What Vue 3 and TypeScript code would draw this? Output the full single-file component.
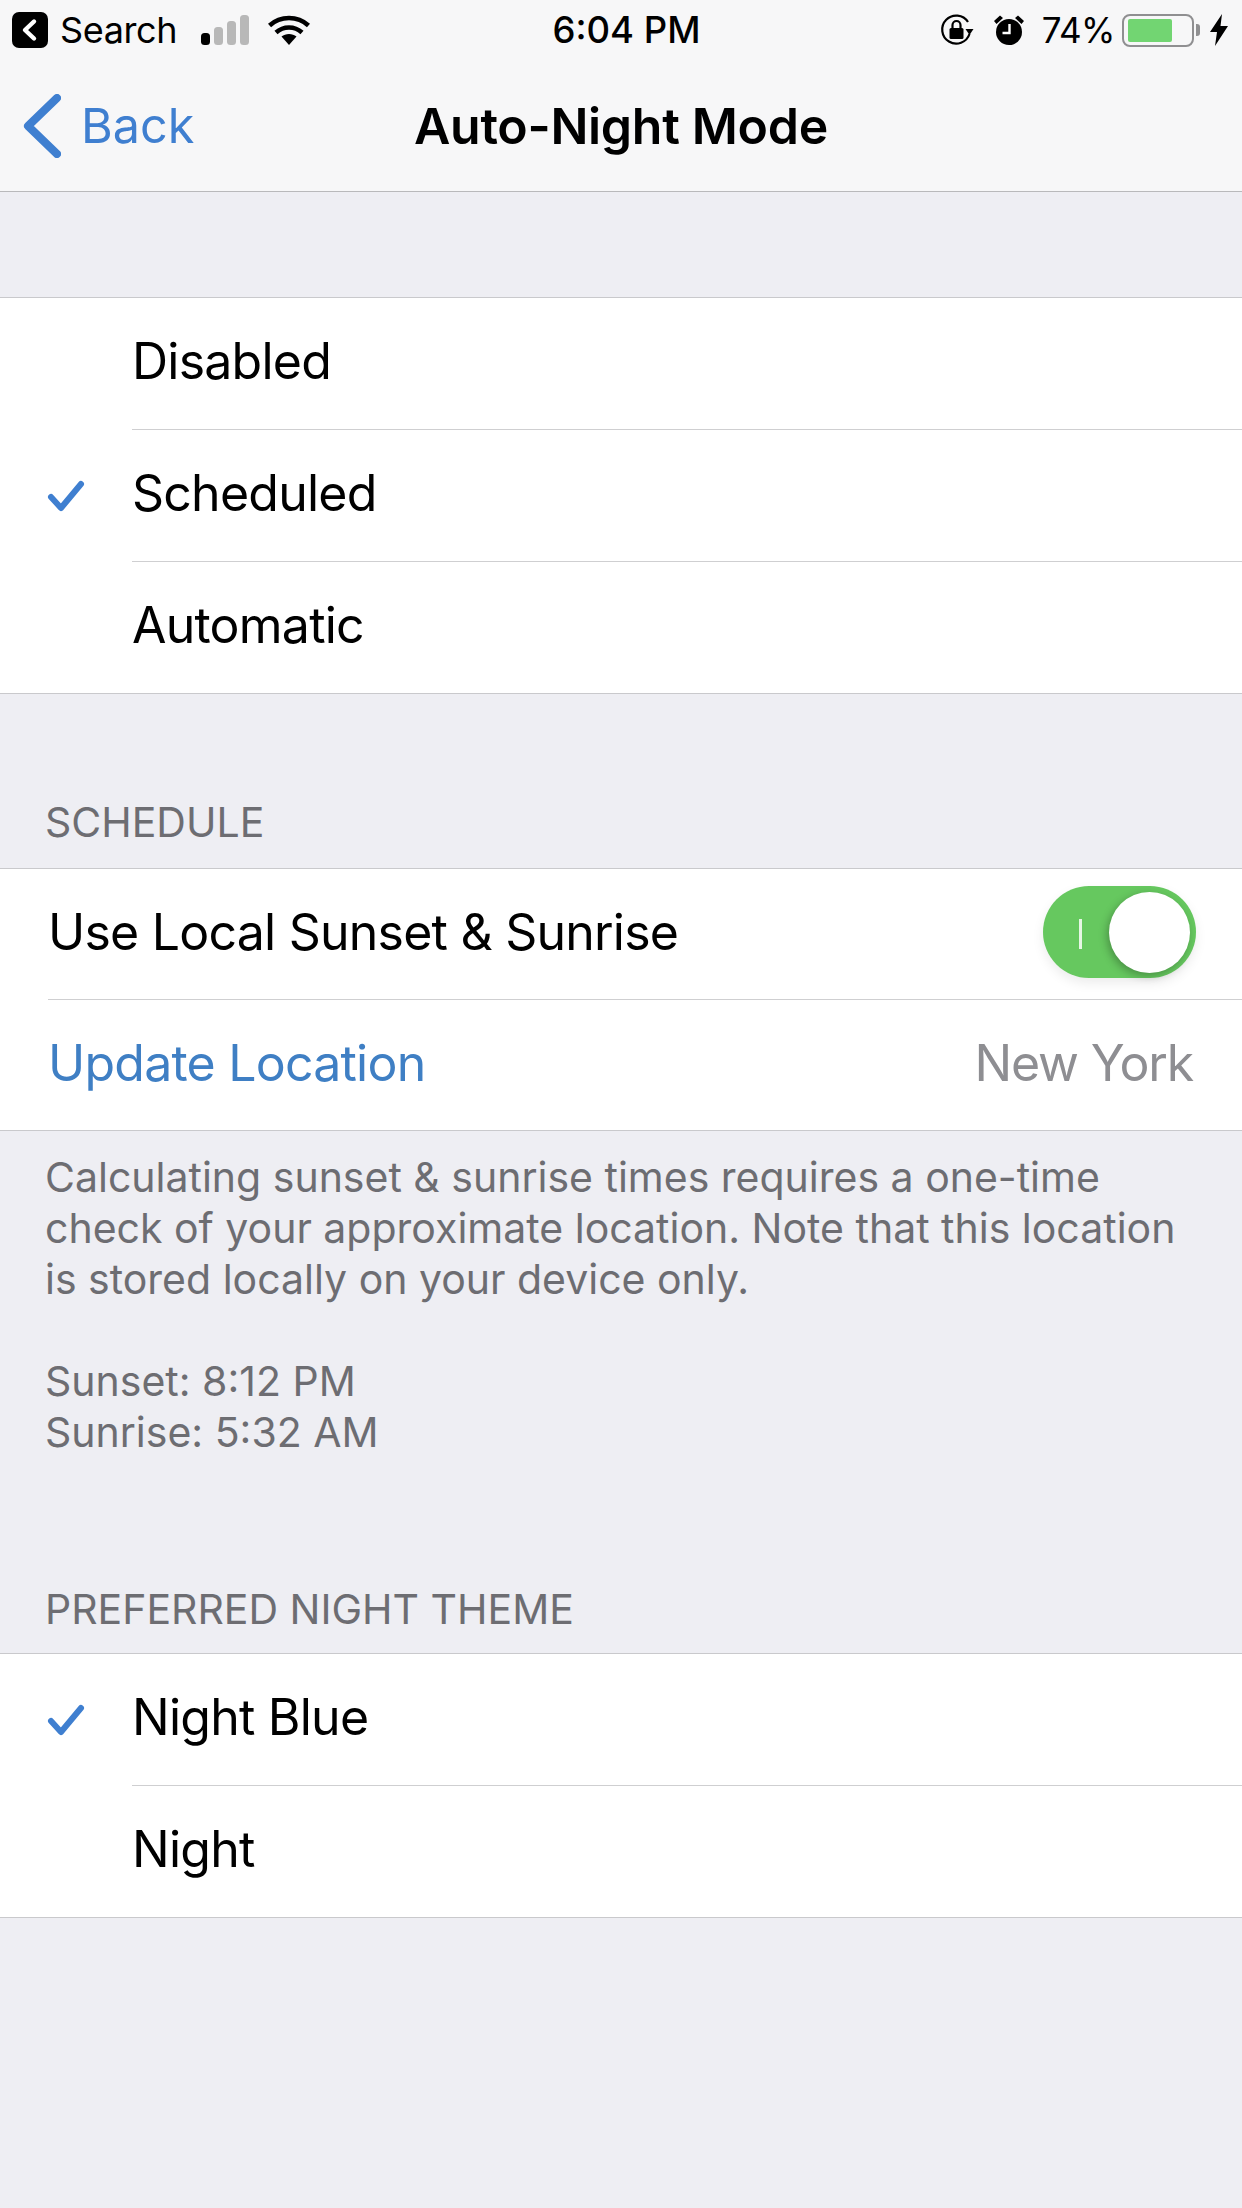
<script setup lang="ts">
interface Row {
  label: string
  checked: boolean
}

const modes: Row[] = [
  { label: 'Disabled', checked: false },
  { label: 'Scheduled', checked: true },
  { label: 'Automatic', checked: false }
]

const themes: Row[] = [
  { label: 'Night Blue', checked: true },
  { label: 'Night', checked: false }
]
</script>

<template>
  <div class="screen">
    <header class="top">
      <div class="status">
        <div class="status-left">
          <svg class="back-app" viewBox="0 0 36 36">
            <rect width="36" height="36" rx="7" fill="#000" />
            <path d="M22 9.5 13 18l9 8.5" fill="none" stroke="#fff" stroke-width="4.4" stroke-linecap="round" stroke-linejoin="round" />
          </svg>
          <span class="search">Search</span>
          <svg class="signal" viewBox="0 0 48 30">
            <rect x="0" y="18" width="9" height="12" rx="3.5" fill="#000" />
            <rect x="13" y="12" width="9" height="18" rx="3.5" fill="#b8b8b8" />
            <rect x="26" y="6" width="9" height="24" rx="3.5" fill="#b8b8b8" />
            <rect x="39" y="0" width="9" height="30" rx="3.5" fill="#b8b8b8" />
          </svg>
          <svg class="wifi" viewBox="0 0 42 30">
            <path d="M21 30 13.500 21.500C17.500 18 24.500 18 28.500 21.500Z" fill="#000" />
            <path d="M1.500 10.500C12.500 .5 29.500 .5 40.500 10.500M8 17.500C15.500 10.800 26.500 10.800 34 17.500" fill="none" stroke="#000" stroke-width="4.600" />
          </svg>
        </div>
        <div class="clock">6:04 PM</div>
        <div class="status-right">
          <svg class="lock" viewBox="0 0 34 34">
            <path d="M29.500 21A14 14 0 1 1 28 9" fill="none" stroke="#000" stroke-width="2.200" />
            <path d="M33.500 16 25.500 16 29.500 22Z" fill="#000" />
            <rect x="9.500" y="15" width="14" height="11" rx="1.500" fill="#000" />
            <path d="M12.500 15v-3a4 4 0 0 1 8 0v3" fill="none" stroke="#000" stroke-width="2.200" />
          </svg>
          <svg class="alarm" viewBox="0 0 32 32">
            <circle cx="16" cy="18" r="13" fill="#000" />
            <path d="M1 7 7 1.500 10 4 3.500 10ZM31 7 25 1.500 22 4 28.500 10Z" fill="#000" />
            <path d="M16.500 10v9H9.500" fill="none" stroke="#fff" stroke-width="2.400" />
          </svg>
          <span class="percent">74%</span>
          <div class="battery">
            <div class="battery-shell">
              <div class="battery-level" :style="{ width: '74%' }"></div>
            </div>
            <div class="battery-cap"></div>
          </div>
          <svg class="bolt" viewBox="0 0 18 32">
            <path d="M12 0 0 18H7L5 32 18 12H10.500Z" fill="#000" />
          </svg>
        </div>
      </div>
      <nav class="nav">
        <div class="nav-back">
          <svg class="chevron" viewBox="0 0 38 64">
            <path d="M34 4 5 32l29 28" fill="none" stroke="#3f7fd0" stroke-width="8" stroke-linecap="round" stroke-linejoin="round" />
          </svg>
          <span>Back</span>
        </div>
        <h1 class="title">Auto-Night Mode</h1>
      </nav>
    </header>

    <section class="group first">
      <div v-for="row in modes" :key="row.label" class="row check-row">
        <div class="check-slot">
          <svg v-if="row.checked" class="check" viewBox="0 0 38 32">
            <path d="M4 17 14 28 34 4" fill="none" stroke="#3f7fd0" stroke-width="6" stroke-linecap="round" stroke-linejoin="round" />
          </svg>
        </div>
        <div class="row-body">{{ row.label }}</div>
      </div>
    </section>

    <h2 class="section-head schedule-head">SCHEDULE</h2>
    <section class="group">
      <div class="row plain-row">
        <div class="row-body">
          <span>Use Local Sunset &amp; Sunrise</span>
          <div class="switch">
            <i class="switch-mark"></i>
            <i class="switch-knob"></i>
          </div>
        </div>
      </div>
      <div class="row plain-row">
        <div class="row-body">
          <span class="link">Update Location</span>
          <span class="value">New York</span>
        </div>
      </div>
    </section>
    <div class="note">
      <p>Calculating sunset &amp; sunrise times requires a one-time<br />check of your approximate location. Note that this location<br />is stored locally on your device only.</p>
      <p>Sunset: 8:12 PM<br />Sunrise: 5:32 AM</p>
    </div>

    <h2 class="section-head theme-head">PREFERRED NIGHT THEME</h2>
    <section class="group">
      <div v-for="row in themes" :key="row.label" class="row check-row">
        <div class="check-slot">
          <svg v-if="row.checked" class="check" viewBox="0 0 38 32">
            <path d="M4 17 14 28 34 4" fill="none" stroke="#3f7fd0" stroke-width="6" stroke-linecap="round" stroke-linejoin="round" />
          </svg>
        </div>
        <div class="row-body">{{ row.label }}</div>
      </div>
    </section>
  </div>
</template>

<style>
html,
body {
  margin: 0;
  background: #eeeef3;
}
</style>

<style scoped>
.screen {
  width: 1242px;
  height: 2208px;
  overflow: hidden;
  background: #eeeef3;
  font-family: Inter, "Liberation Sans", sans-serif;
  color: #000;
}

.top {
  height: 192px;
  background: #f7f7f8;
  border-bottom: 1px solid #b9b9bb;
  box-sizing: border-box;
}

.status {
  height: 60px;
  display: grid;
  grid-template-columns: 1fr auto 1fr;
  align-items: center;
  padding: 0 14px 0 12px;
}

.status-left,
.status-right {
  display: flex;
  align-items: center;
}

.status-right {
  justify-content: flex-end;
}

.back-app {
  width: 36px;
  height: 36px;
}

.search {
  font-size: 36px;
  margin-left: 12px;
  letter-spacing: -0.4px;
}

.signal {
  width: 48px;
  height: 30px;
  margin-left: 24px;
}

.wifi {
  width: 42px;
  height: 30px;
  margin-left: 19px;
}

.clock {
  font-size: 36.500px;
  font-weight: 500;
  margin-left: 13px;
}

.lock {
  width: 34px;
  height: 34px;
}

.alarm {
  width: 32px;
  height: 32px;
  margin-left: 19px;
}

.percent {
  font-size: 35px;
  margin-left: 17px;
  letter-spacing: -0.5px;
}

.battery {
  display: flex;
  align-items: center;
  margin-left: 7px;
}

.battery-shell {
  width: 72px;
  height: 33px;
  box-sizing: border-box;
  border: 2.500px solid #8f8f91;
  border-radius: 8px;
  padding: 3px 4px;
}

.battery-level {
  height: 100%;
  background: #72d572;
  border-radius: 2px;
}

.battery-cap {
  width: 4px;
  height: 12px;
  background: #8f8f91;
  border-radius: 0 3px 3px 0;
  margin-left: 2px;
}

.bolt {
  width: 18px;
  height: 32px;
  margin-left: 10px;
}

.nav {
  height: 131px;
  position: relative;
  display: flex;
  align-items: center;
  justify-content: center;
}

.nav-back {
  position: absolute;
  left: 23px;
  top: 0;
  bottom: 0;
  display: flex;
  align-items: center;
  font-size: 48.500px;
  color: #3f7fd0;
}

.chevron {
  width: 38px;
  height: 64px;
  margin-right: 20px;
}

.title {
  margin: 0;
  font-size: 50px;
  font-weight: 600;
  letter-spacing: -0.3px;
}

.group {
  background: #fff;
  border-top: 1px solid #c9c9cc;
  border-bottom: 1px solid #c9c9cc;
}

.first {
  margin-top: 105px;
}

.row {
  display: flex;
  height: 131.400px;
  box-sizing: border-box;
  font-size: 50px;
  letter-spacing: -0.770px;
}

.first .row {
  height: 131.800px;
}

.check-slot {
  width: 132px;
  flex: none;
  display: flex;
  align-items: center;
  padding-left: 47px;
  box-sizing: border-box;
}

.check {
  width: 38px;
  height: 32px;
}

.row-body {
  flex: 1;
  display: flex;
  align-items: center;
  justify-content: space-between;
  border-bottom: 1px solid #cfcfd1;
  padding-bottom: 4px;
}

.row:last-child .row-body {
  border-bottom: none;
}

.plain-row {
  height: 130.400px;
  padding-left: 48px;
}

.plain-row .row-body {
  padding-right: 49px;
}

.link {
  color: #3f7fc4;
}

.value {
  color: #8e8e92;
  letter-spacing: -1.200px;
}

.switch {
  width: 153px;
  height: 92px;
  margin-right: -3px;
  border-radius: 46px;
  background: #66c85f;
  position: relative;
  box-shadow: 0 5px 12px rgba(0, 0, 0, 0.08);
}

.switch-mark {
  position: absolute;
  left: 36px;
  top: 33px;
  width: 3px;
  height: 30px;
  background: #e6f6e4;
}

.switch-knob {
  position: absolute;
  right: 6px;
  top: 6px;
  width: 81px;
  height: 81px;
  border-radius: 50%;
  background: #fff;
  box-shadow: -2px 3px 9px rgba(0, 0, 0, 0.28);
}

.section-head {
  margin: 0;
  padding-left: 45px;
  font-size: 41px;
  font-weight: 400;
  line-height: 50px;
  color: #6d6d72;
}

.schedule-head {
  margin-top: 103px;
  margin-bottom: 21px;
}

.theme-head {
  margin-top: 126px;
  margin-bottom: 19px;
}

.note {
  padding: 21px 40px 0 45px;
  font-size: 41px;
  line-height: 51px;
  color: #6d6d72;
}

.note p {
  margin: 0 0 51px;
}
</style>
